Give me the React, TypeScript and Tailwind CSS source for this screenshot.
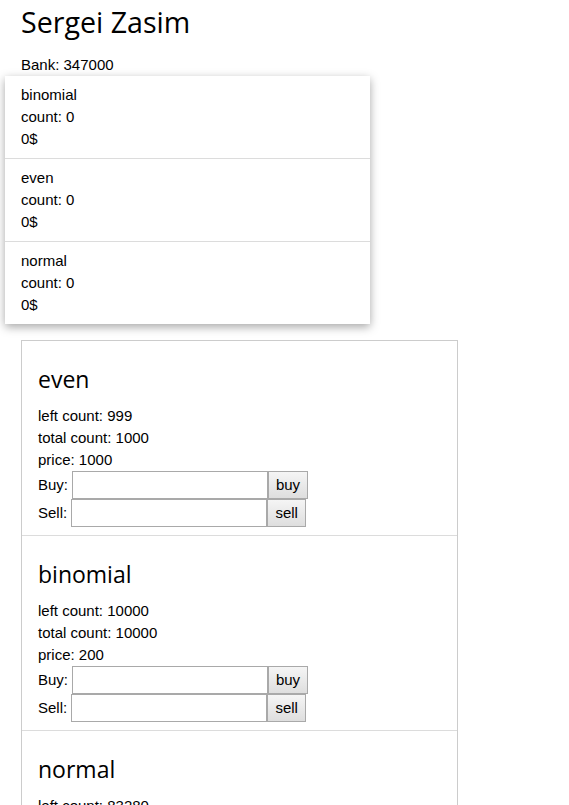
import React from "react";

const heading = { fontFamily: '"Segoe UI", "Open Sans", "Noto Sans", sans-serif' };

function Section({ name, left, total, price, last }: { name: string; left: number; total: number; price: number; last?: boolean }) {
  return (
    <div className={`px-4 pt-[22px] pb-[8px] ${last ? "" : "border-b border-[#dcdcdc]"}`}>
      <h2 className="text-[23px] leading-[32px] mb-[10px]" style={heading}>{name}</h2>
      <div className="leading-[22px]">left count: {left}</div>
      <div className="leading-[22px]">total count: {total}</div>
      <div className="leading-[22px]">price: {price}</div>
      <div className="flex items-center h-[28px]">
        <span className="mr-[4px]">Buy:</span>
        <input className="w-[196px] h-[28px] border border-[#a9a9a9] bg-white" />
        <button className="h-[28px] w-[40px] border border-[#a9a9a9] bg-gradient-to-b from-[#f5f5f5] to-[#dedede] text-[15px]">buy</button>
      </div>
      <div className="flex items-center h-[28px]">
        <span className="mr-[4px]">Sell:</span>
        <input className="w-[196px] h-[28px] border border-[#a9a9a9] bg-white" />
        <button className="h-[28px] w-[39px] border border-[#a9a9a9] bg-gradient-to-b from-[#f5f5f5] to-[#dedede] text-[15px]">sell</button>
      </div>
    </div>
  );
}

export default function App() {
  const items = ["binomial", "even", "normal"];
  return (
    <div className="relative bg-white text-black text-[15px] min-h-[805px] pl-[21px]" style={{ fontFamily: '"Liberation Sans", Arial, sans-serif' }}>
      <h1 className="text-[28.6px] leading-[40px] pt-[2px]" style={heading}>Sergei Zasim</h1>
      <div className="leading-[22px] mt-[12px]">Bank: 347000</div>
      <div className="absolute left-[5px] top-[76px] w-[365px] bg-white shadow-[0_3px_9px_rgba(0,0,0,0.35)] z-10">
        {items.map((n, i) => (
          <div key={n} className={`px-4 py-2 ${i < 2 ? "border-b border-[#dcdcdc]" : ""}`}>
            <div className="leading-[22px]">{n}</div>
            <div className="leading-[22px]">count: 0</div>
            <div className="leading-[22px]">0$</div>
          </div>
        ))}
      </div>
      <div className="mt-[264px] w-[437px] border border-[#cccccc]">
        <Section name="even" left={999} total={1000} price={1000} />
        <Section name="binomial" left={10000} total={10000} price={200} />
        <Section name="normal" left={83280} total={100000} price={100} last />
      </div>
    </div>
  );
}
